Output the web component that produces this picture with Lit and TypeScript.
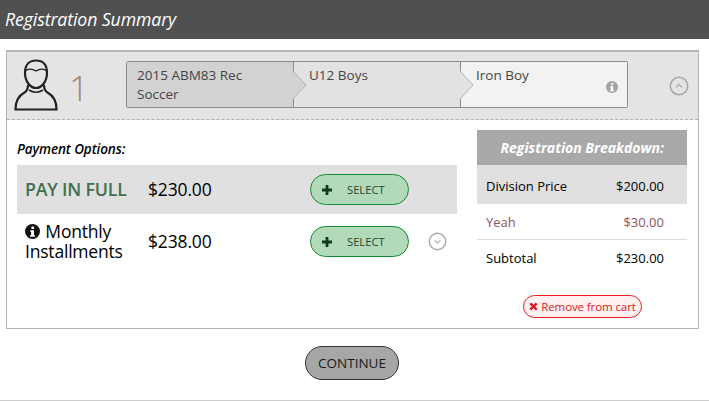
import { LitElement, html, css } from "lit";
import { customElement } from "lit/decorators.js";

const infoIcon = (cls: string) => html`<svg class=${cls} viewBox="0 0 16 16"><circle cx="8" cy="8" r="8" fill="currentColor"/><rect x="6.8" y="2.6" width="2.8" height="2.7" rx=".6" fill="#fff"/><path d="M5.6 6.6h4v5.4h1.1v1.6H5.4V12h1.1V8.2H5.6z" fill="#fff"/></svg>`;
const circleChevron = (up: boolean) => html`<svg class="chev" viewBox="0 0 20 20"><circle cx="10" cy="10" r="8.7" fill="none" stroke="#a8a8a8" stroke-width="1.5"/><path d=${up ? "M7 11.3 10 8.6l3 2.7" : "M7 8.9l3 2.7 3-2.7"} fill="none" stroke="#a8a8a8" stroke-width="1.1"/></svg>`;
const plus = html`<svg class="plus" viewBox="0 0 10 10"><path d="M3.6 0h2.8v3.6H10v2.8H6.4V10H3.6V6.4H0V3.6h3.6z" fill="#0b3d1b"/></svg>`;

@customElement("app-root")
export class AppRoot extends LitElement {
  static styles = css`
    :host { display: block; width: 709px; height: 401px; overflow: hidden; background: #fff;
      font-family: "Open Sans", "Noto Sans", sans-serif; color: #000; box-sizing: border-box; border-bottom: 1px solid #ccc; }
    * { box-sizing: border-box; }
    .title { height: 39px; background: #505050; color: #fff; font-style: italic; font-size: 17.7px; line-height: 39px; padding-left: 5px; letter-spacing: -.1px; }
    .box { margin: 11px 10px 0 6px; height: 279px; border: 1px solid #b4b4b4; border-top-width: 2px; }
    .head { height: 68px; background: #e4e4e4; border-bottom: 1px dashed #b0b0b0; display: flex; align-items: flex-start; position: relative; }
    .avatar { width: 44px; height: 52px; margin: 7px 0 0 7px; flex: none; }
    .num { width: 24px; margin: 14px 0 0 11px; font-size: 35px; line-height: 44px; font-weight: 300; color: #a5856f; flex: none; }
    .crumbs { width: 502px; height: 47px; margin: 9px 0 0 33px; display: flex; border: 1px solid #8c8c8c; border-radius: 2px; flex: none; }
    .crumb { position: relative; font-size: 13.5px; line-height: 19px; padding: 4px 8px 0 10px; color: #444; }
    .c1 { width: 166px; background: #d2d2d2; }
    .c2 { width: 167px; background: #e2e2e2; border-left: 1px solid #8c8c8c; padding-left: 15px; }
    .c3 { flex: 1; background: #f2f2f2; border-left: 1px solid #8c8c8c; padding-left: 15px; }
    .arrow { position: absolute; left: -1px; top: 9px; width: 14px; height: 28px; overflow: visible; }
    .info-sm { position: absolute; right: 9px; bottom: 14px; width: 12px; height: 12px; color: #a4a4a4; }
    .chev { width: 20px; height: 20px; flex: none; }
    .head > .chev { margin: 24px 0 0 41px; }
    .body { display: flex; }
    .left { width: 470px; padding: 20px 0 0 10px; flex: none; }
    .po { font-size: 13.5px; line-height: 18px; font-style: italic; font-weight: 600; letter-spacing: -.1px; }
    .row { width: 440px; height: 49px; display: flex; align-items: center; margin-top: 7px; }
    .row.full { background: #e0e0e0; }
    .row.mon { margin-top: 0; height: 55px; }
    .name { width: 131px; padding: 0 0 2px 8px; font-size: 17.5px; line-height: 20px; flex: none; letter-spacing: -.2px; }
    .full .name { color: #41704f; font-weight: 600; font-size: 17.8px; }
    .mon .name { font-weight: 500; }
    .info-bk { width: 15px; height: 15px; color: #111; vertical-align: -1px; margin-right: 1px; }
    .price { width: 162px; padding-bottom: 2px; font-size: 17.5px; font-weight: 500; flex: none; letter-spacing: -.15px; }
    .sel { width: 99px; height: 31px; border: 1px solid #138a35; border-radius: 16px; background: #b2d9ba; display: flex; align-items: center; padding-left: 11px; font-size: 11.2px; color: #1d4a2b; flex: none; }
    .plus { width: 10px; height: 10px; margin-right: 15px; }
    .row .chev { margin-left: 19px; width: 19px; height: 19px; }
    .right { width: 210px; margin-top: 10px; flex: none; }
    .rh { height: 35px; background: #a9a9a9; color: #fff; font-size: 14px; font-weight: 700; font-style: italic; line-height: 35px; text-align: right; padding-right: 23px; }
    .line { height: 36px; display: flex; justify-content: space-between; align-items: center; font-size: 13px; padding: 0 23px 0 9px; border-bottom: 1px solid #dcdcdc; }
    .line.a { background: #e0e0e0; height: 39px; padding-top: 3px; border-bottom: none; }
    .line.b { color: #8d5264; padding-top: 1px; }
    .line.c { border-bottom: none; height: 37px; padding-bottom: 2px; }
    .rmv-wrap { display: flex; justify-content: center; margin-top: 18px; padding-left: 1px; }
    .rmv { height: 23px; width: 119px; border: 1px solid #ee1c25; border-radius: 12px; background: #fff0f0; color: #d81e26; font-size: 11.5px; display: flex; align-items: center; justify-content: center; gap: 3px; letter-spacing: -.1px; }
    .x { width: 9px; height: 9px; }
    .foot { display: flex; justify-content: center; margin-top: 17px; padding-right: 5px; }
    .cont { width: 94px; height: 34px; border: 1px solid #333; border-radius: 17px; background: #a6a6a6; font-size: 13.5px; line-height: 32px; text-align: center; color: #1a1a1a; }
  `;

  render() {
    return html`
      <div class="title">Registration Summary</div>
      <div class="box">
        <div class="head">
          <svg class="avatar" viewBox="0 0 44 52" fill="none" stroke="#222" stroke-width="2.2">
            <path d="M11 14C11 6 15 1.500 22 1.500S33 6 33 14c0 8-5 15-11 15S11 22 11 14z"/>
            <path d="M11 12c4-3 7-2.500 11 0 4-2.500 7-3 11 0" stroke-width="1.400"/>
            <path d="M14 26c0 4-1 6-3.500 7.500C5 36.500 1.500 42 1.500 50.500h41C42.500 42 39 36.500 33.500 33.500 31 32 30 30 30 26"/>
            <path d="M15 31c4 3 10 3 14 0" stroke-width="1.600"/>
          </svg>
          <div class="num">1</div>
          <div class="crumbs">
            <div class="crumb c1">2015 ABM83 Rec<br />Soccer</div>
            <div class="crumb c2">
              <svg class="arrow" viewBox="0 0 14 28"><path d="M0 0 13 14 0 28z" fill="#d2d2d2"/><path d="M0 0 13 14 0 28" fill="none" stroke="#b4b4b4"/></svg>
              U12 Boys
            </div>
            <div class="crumb c3">
              <svg class="arrow" viewBox="0 0 14 28"><path d="M0 0 13 14 0 28z" fill="#e2e2e2"/><path d="M0 0 13 14 0 28" fill="none" stroke="#b4b4b4"/></svg>
              Iron Boy
              ${infoIcon("info-sm")}
            </div>
          </div>
          ${circleChevron(true)}
        </div>
        <div class="body">
          <div class="left">
            <div class="po">Payment Options:</div>
            <div class="row full">
              <div class="name">PAY IN FULL</div>
              <div class="price">$230.00</div>
              <div class="sel">${plus}SELECT</div>
            </div>
            <div class="row mon">
              <div class="name">${infoIcon("info-bk")} Monthly Installments</div>
              <div class="price">$238.00</div>
              <div class="sel">${plus}SELECT</div>
              ${circleChevron(false)}
            </div>
          </div>
          <div class="right">
            <div class="rh">Registration Breakdown:</div>
            <div class="line a"><span>Division Price</span><span>$200.00</span></div>
            <div class="line b"><span>Yeah</span><span>$30.00</span></div>
            <div class="line c"><span>Subtotal</span><span>$230.00</span></div>
            <div class="rmv-wrap">
              <div class="rmv"><svg class="x" viewBox="0 0 10 10"><path d="M1.500 1.500 8.500 8.500M8.500 1.500 1.500 8.500" stroke="#e0151d" stroke-width="2.600"/></svg>Remove from cart</div>
            </div>
          </div>
        </div>
      </div>
      <div class="foot"><div class="cont">CONTINUE</div></div>
    `;
  }
}
